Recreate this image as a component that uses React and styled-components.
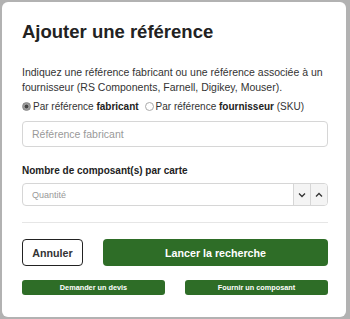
import React from 'react';
import styled, { createGlobalStyle } from 'styled-components';

const Global = createGlobalStyle`
  html, body {
    margin: 0;
    padding: 0;
    background: #b2b2b2;
    font-family: "Liberation Sans", Arial, sans-serif;
  }
`;

const Page = styled.div`
  width: 350px;
  height: 319px;
  padding: 2px 4px 0 2px;
  box-sizing: border-box;
`;

const Modal = styled.div`
  background: #fff;
  border-radius: 6px;
  padding: 18px 18px 22px 20px;
  height: 315px;
  box-sizing: border-box;
`;

const Title = styled.h1`
  margin: 0;
  font-size: 18.5px;
  line-height: 24px;
  font-weight: bold;
  color: #222;
`;

const Intro = styled.p`
  margin: 21px 0 0;
  font-size: 10.5px;
  line-height: 15px;
  color: #333;
`;

const RadioRow = styled.div`
  margin-top: 5px;
  font-size: 10px;
  line-height: 14px;
  color: #333;
  white-space: nowrap;
`;

const RadioLabel = styled.label`
  margin-right: 6px;
  b { font-weight: bold; color: #222; }
`;

const Dot = styled.span`
  display: inline-block;
  vertical-align: -1px;
  margin-right: 2px;
  width: 9px;
  height: 9px;
  border-radius: 50%;
  box-sizing: border-box;
  border: 1px solid ${p => (p.$on ? '#888' : '#aaa')};
  background: ${p => (p.$on ? 'radial-gradient(circle, #444 0 1.6px, #9a9a9a 2.2px)' : '#fff')};
`;

const TextInput = styled.div`
  margin-top: 7px;
  height: 26px;
  border: 1px solid #d6d6d6;
  border-radius: 4px;
  box-sizing: border-box;
  display: flex;
  align-items: center;
  padding: 0 9px;
  font-size: 10.5px;
  color: #999;
`;

const FieldLabel = styled.div`
  margin-top: 17px;
  font-size: 10px;
  line-height: 14px;
  font-weight: bold;
  color: #222;
`;

const NumberInput = styled.div`
  margin-top: 5px;
  height: 23px;
  border: 1px solid #d6d6d6;
  border-radius: 4px;
  box-sizing: border-box;
  display: flex;
  overflow: hidden;
`;

const NumberText = styled.div`
  flex: 1;
  display: flex;
  align-items: center;
  padding: 0 9px;
  font-size: 9px;
  color: #999;
`;

const Spin = styled.div`
  width: 16px;
  border-left: 1px solid #d6d6d6;
  background: #f4f4f4;
  display: flex;
  align-items: center;
  justify-content: center;
`;

const Rule = styled.hr`
  margin: 16px 0 0;
  border: 0;
  border-top: 1px solid #e6e6e6;
`;

const ButtonRow = styled.div`
  margin-top: 16px;
  display: flex;
  gap: 20px;
`;

const Cancel = styled.button`
  width: 61px;
  height: 27px;
  border: 1.5px solid #222;
  border-radius: 4px;
  background: #fff;
  font-family: inherit;
  font-size: 10.7px;
  font-weight: bold;
  color: #333;
  padding: 0;
`;

const Primary = styled.button`
  flex: 1;
  height: 27px;
  border: 0;
  border-radius: 4px;
  background: #2e6d27;
  color: #fff;
  font-family: inherit;
  font-size: 10.7px;
  font-weight: bold;
  padding: 0;
`;

const SmallRow = styled.div`
  margin-top: 14px;
  display: flex;
  gap: 20px;
`;

const Small = styled.button`
  flex: 1;
  height: 15px;
  border: 0;
  border-radius: 3px;
  background: #2e6d27;
  color: #fff;
  font-family: inherit;
  font-size: 7.3px;
  font-weight: bold;
  padding: 0;
`;

const Chevron = ({ up }) => (
  <svg width="8" height="6" viewBox="0 0 8 6">
    <path d={up ? 'M1 4.5 L4 1.5 L7 4.5' : 'M1 1.5 L4 4.5 L7 1.5'} fill="none" stroke="#333" strokeWidth="1.3" />
  </svg>
);

export default function App() {
  return (
    <Page>
      <Global />
      <Modal>
        <Title>Ajouter une référence</Title>
        <Intro>
          Indiquez une référence fabricant ou une référence associée à un fournisseur (RS Components, Farnell, Digikey, Mouser).
        </Intro>
        <RadioRow>
          <RadioLabel><Dot $on />Par référence <b>fabricant</b></RadioLabel>
          <RadioLabel><Dot />Par référence <b>fournisseur</b> (SKU)</RadioLabel>
        </RadioRow>
        <TextInput>Référence fabricant</TextInput>
        <FieldLabel>Nombre de composant(s) par carte</FieldLabel>
        <NumberInput>
          <NumberText>Quantité</NumberText>
          <Spin><Chevron /></Spin>
          <Spin><Chevron up /></Spin>
        </NumberInput>
        <Rule />
        <ButtonRow>
          <Cancel>Annuler</Cancel>
          <Primary>Lancer la recherche</Primary>
        </ButtonRow>
        <SmallRow>
          <Small>Demander un devis</Small>
          <Small>Fournir un composant</Small>
        </SmallRow>
      </Modal>
    </Page>
  );
}
